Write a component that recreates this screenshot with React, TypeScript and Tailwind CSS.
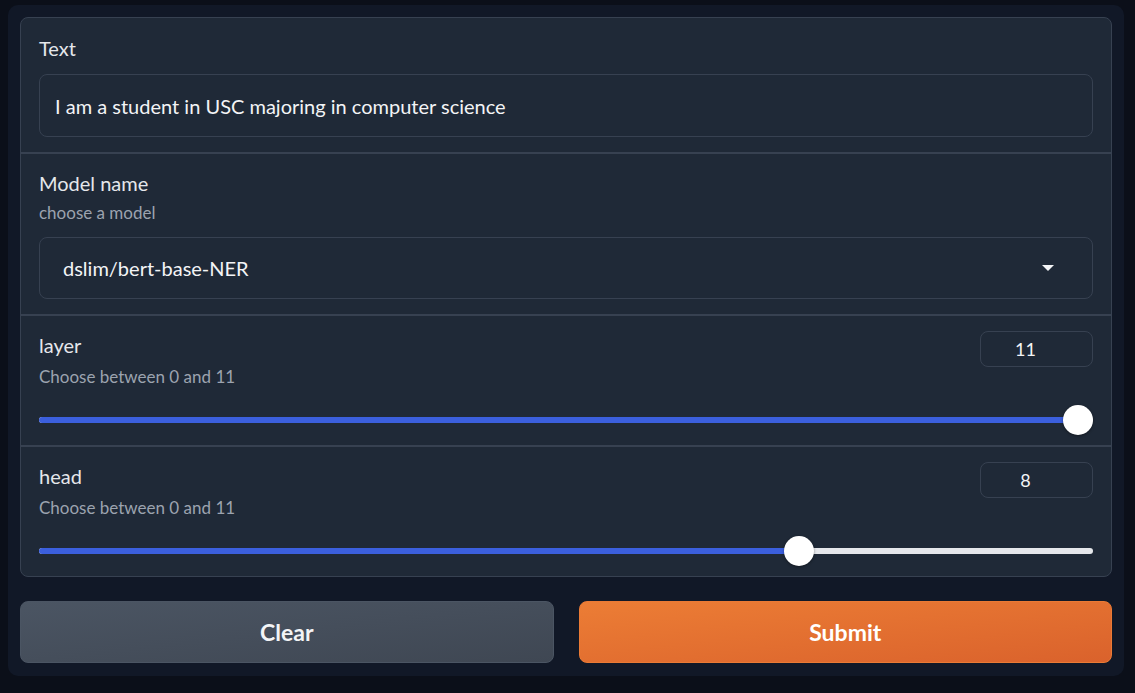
const font = { fontFamily: "Lato, 'Noto Sans', sans-serif" };

function Slider({ value, max }: { value: number; max: number }) {
  const pct = value / max;
  return (
    <div className="relative h-[30px] mt-[17px]">
      <div className="absolute left-0 right-0 top-[12px] h-[6px] rounded-full bg-[#e5e7eb]" />
      <div
        className="absolute left-0 top-[12px] h-[6px] rounded-full bg-[#3b5fdd]"
        style={{ width: `calc(15px + (100% - 30px) * ${pct})` }}
      />
      <div
        className="absolute top-0 h-[30px] w-[30px] rounded-full bg-white shadow-[0_1px_3px_rgba(0,0,0,0.4)]"
        style={{ left: `calc((100% - 30px) * ${pct})` }}
      />
    </div>
  );
}

function SliderBlock({ label, value }: { label: string; value: number }) {
  return (
    <div className="px-[18px] pt-[15px] pb-[10px]">
      <div className="flex justify-between items-start">
        <div>
          <div className="text-[20px] leading-[30px] text-[#e5e7eb] -mt-[1px]">{label}</div>
          <div className="text-[17px] leading-[22px] text-[#9ca3af] mt-[6px]">Choose between 0 and 11</div>
        </div>
        <div className="w-[113px] h-[36px] rounded-[8px] border border-[#374151] flex items-center justify-center pr-[22px] text-[18px] text-[#f3f4f6]">
          {value}
        </div>
      </div>
      <Slider value={value} max={11} />
    </div>
  );
}

export default function App() {
  return (
    <div className="min-h-[693px] bg-[#0b0f19] pt-[5px] pl-[8px] pr-[11px] pb-[18px]" style={font}>
      <div className="rounded-[10px] bg-[#111827] p-[12px] pb-[13px]">
        <div className="rounded-[8px] border border-[#374151] bg-[#1f2937] overflow-hidden">
          <div className="px-[18px] pt-[19px] pb-[15px]">
            <div className="text-[20px] leading-[22px] text-[#e5e7eb]">Text</div>
            <div className="mt-[15px] h-[63px] rounded-[8px] border border-[#374151] flex items-center px-[15px] text-[20px] text-[#f3f4f6]">
              I am a student in USC majoring in computer science
            </div>
          </div>
          <div className="border-t-2 border-[#374151] px-[18px] pt-[16px] pb-[15px]">
            <div className="text-[20px] leading-[26px] text-[#e5e7eb]">Model name</div>
            <div className="text-[17px] leading-[22px] text-[#9ca3af] mt-[6px]">choose a model</div>
            <div className="mt-[13px] h-[62px] rounded-[8px] border border-[#374151] flex items-center justify-between pl-[23px] pr-[37px] text-[20px] text-[#f3f4f6]">
              <span>dslim/bert-base-NER</span>
              <svg width="14" height="8" viewBox="0 0 14 8"><path d="M1 1h12L7 7z" fill="#f3f4f6" /></svg>
            </div>
          </div>
          <div className="border-t-2 border-[#374151]">
            <SliderBlock label="layer" value={11} />
          </div>
          <div className="border-t-2 border-[#374151]">
            <SliderBlock label="head" value={8} />
          </div>
        </div>
        <div className="mt-[24px] grid grid-cols-2 gap-[25px]">
          <button className="h-[62px] rounded-[8px] border border-[#4b5563] bg-gradient-to-br from-[#4b5563] to-[#3f4753] text-[23px] font-bold text-[#f3f4f6]">
            Clear
          </button>
          <button className="h-[62px] rounded-[8px] border border-[#ea7a35] bg-gradient-to-br from-[#ec7d35] to-[#da622c] text-[23px] font-bold text-white">
            Submit
          </button>
        </div>
      </div>
    </div>
  );
}
